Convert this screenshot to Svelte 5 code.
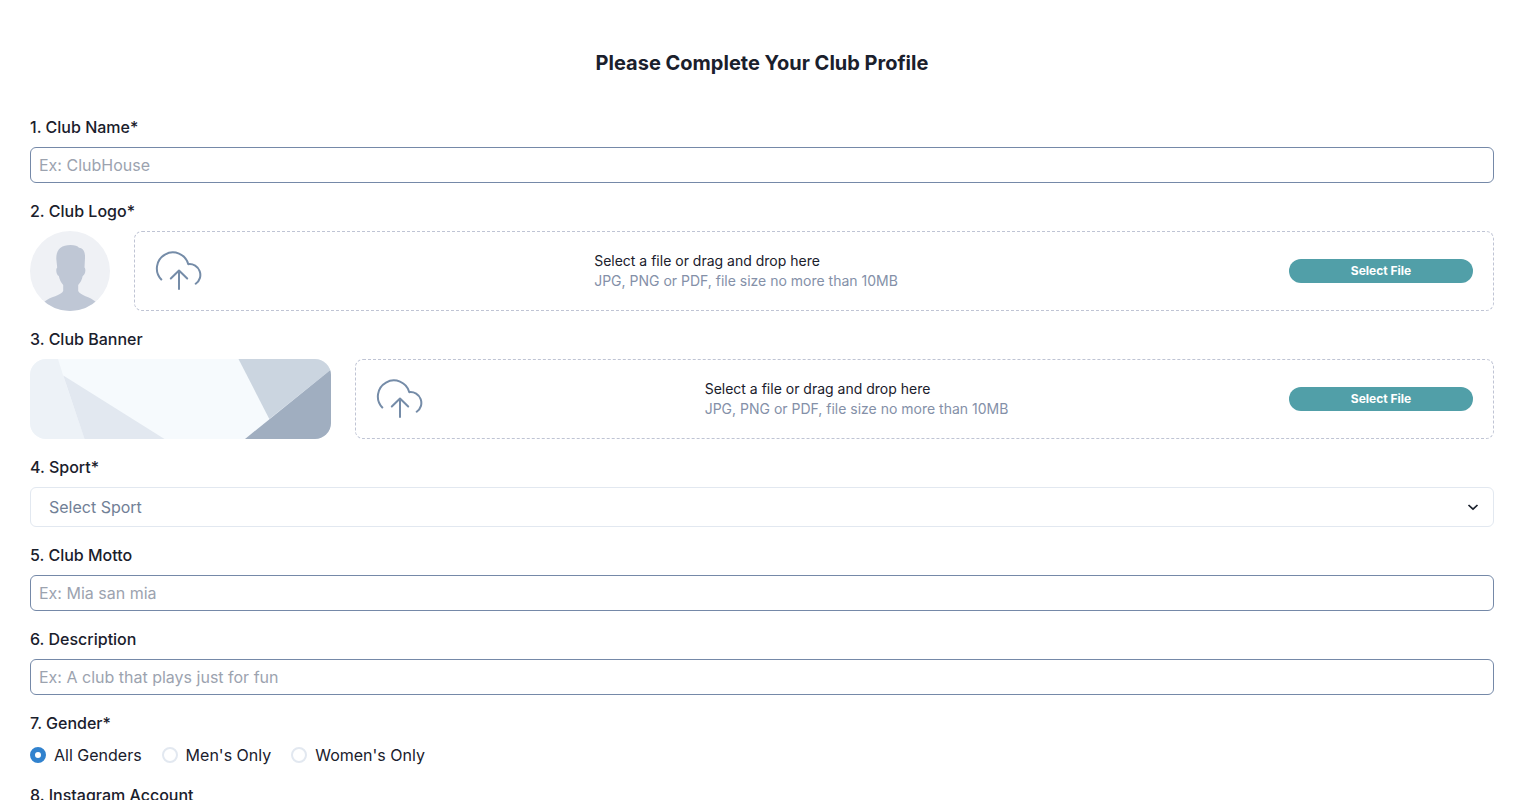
<script lang="ts">
  let gender = $state('all');
  let sport = $state('');
  const genders = [
    { value: 'all', label: 'All Genders' },
    { value: 'men', label: "Men's Only" },
    { value: 'women', label: "Women's Only" },
  ];
</script>

{#snippet dropzone(name: string)}
  <div class="dropzone">
    <svg class="cloud" viewBox="0 0 48 48" aria-hidden="true">
      <path d="M6.300 32.500A16 16 0 1 1 33.300 17.200A10.800 10.800 0 0 1 40.700 36.800" />
      <path d="M24 42V23.500M15.800 31.500L24 23.500L32.200 31.500" />
    </svg>
    <div class="hint">
      <p>Select a file or drag and drop here</p>
      <p class="limits">JPG, PNG or PDF, file size no more than 10MB</p>
    </div>
    <button type="button" aria-describedby={name}>Select File</button>
  </div>
{/snippet}

<form>
  <h1>Please Complete Your Club Profile</h1>

  <div class="field">
    <label class="label" for="name">1. Club Name*</label>
    <input id="name" class="text" type="text" placeholder="Ex: ClubHouse" />
  </div>

  <div class="field">
    <span class="label" id="logo">2. Club Logo*</span>
    <div class="upload">
      <svg class="avatar" viewBox="0 0 80 80" aria-hidden="true">
        <rect width="80" height="80" fill="#eff1f5" />
        <path fill="#bfc7d5" d="M40.500 14C45 14 47.500 15 49 16.700C53.500 17.300 55.300 21 55 27L54.500 36.500C56.200 38 55.300 44 52.700 45C52 48.500 50.500 51.500 48.200 54V60C50 64.500 60 65.500 66 71V80H14V71C20 65.500 31.500 64.500 33.200 60V54C31 51.500 29.500 48.500 28.800 45C26.200 44 25.500 38 27.200 36.500L26.300 28C26 18.500 31 14 40.500 14Z" />
      </svg>
      {@render dropzone('logo')}
    </div>
  </div>

  <div class="field">
    <span class="label" id="banner">3. Club Banner</span>
    <div class="upload">
      <svg class="banner" viewBox="0 0 301 80" preserveAspectRatio="none" aria-hidden="true">
        <rect width="301" height="80" fill="#f6fafd" />
        <path fill="#edf2f7" d="M0 0H28L33.300 17L54.500 80H0Z" />
        <path fill="#e2e8f0" d="M33.300 16.500L134.500 80H54.500Z" />
        <path fill="#cbd5e0" d="M208.500 0H301V10.500L239.300 60Z" />
        <path fill="#a0aec0" d="M301 10.500V80H215Z" />
      </svg>
      {@render dropzone('banner')}
    </div>
  </div>

  <div class="field">
    <label class="label" for="sport">4. Sport*</label>
    <div class="picker">
      <select id="sport" bind:value={sport}>
        <option value="">Select Sport</option>
      </select>
      <svg class="chevron" viewBox="0 0 20 20" aria-hidden="true">
        <path d="M5.500 8L10 12.200L14.500 8" />
      </svg>
    </div>
  </div>

  <div class="field">
    <label class="label" for="motto">5. Club Motto</label>
    <input id="motto" class="text" type="text" placeholder="Ex: Mia san mia" />
  </div>

  <div class="field">
    <label class="label" for="description">6. Description</label>
    <input id="description" class="text" type="text" placeholder="Ex: A club that plays just for fun" />
  </div>

  <div class="field">
    <span class="label" id="gender">7. Gender*</span>
    <div class="radios" role="radiogroup" aria-labelledby="gender">
      {#each genders as g}
        <label>
          <input type="radio" name="gender" value={g.value} bind:group={gender} />
          {g.label}
        </label>
      {/each}
    </div>
  </div>

  <div class="field">
    <label class="label" for="instagram">8. Instagram Account</label>
    <input id="instagram" class="text" type="text" />
  </div>
</form>

<style>
  :global(html) {
    scrollbar-width: none;
  }
  :global(body) {
    background: #fff;
  }
  form {
    display: flex;
    flex-direction: column;
    gap: 16px;
    padding: 47px 25px 24px 30px;
    font: 400 16px/24px Inter, sans-serif;
    color: #1a202c;
  }
  h1 {
    margin: 0 0 20px;
    font-size: 20px;
    line-height: 32px;
    font-weight: 700;
    text-align: center;
  }
  .field {
    display: flex;
    flex-direction: column;
    gap: 8px;
  }
  .label {
    font-weight: 500;
  }
  .text {
    box-sizing: border-box;
    width: 100%;
    height: 36px;
    padding: 0 8px;
    border: 1px solid #7589a8;
    border-radius: 6px;
    background: #fff;
    font: inherit;
    color: inherit;
  }
  .text::placeholder {
    color: #9ca3af;
    opacity: 1;
  }
  .upload {
    display: flex;
    gap: 24px;
  }
  .avatar {
    flex: none;
    width: 80px;
    height: 80px;
    border-radius: 50%;
  }
  .banner {
    flex: none;
    width: 301px;
    height: 80px;
    border-radius: 16px;
  }
  .dropzone {
    flex: 1;
    display: flex;
    align-items: center;
    justify-content: space-between;
    box-sizing: border-box;
    height: 80px;
    padding: 0 20px;
    border: 1px dashed #bfc4d4;
    border-radius: 8px;
  }
  .cloud {
    width: 48px;
    height: 48px;
    fill: none;
    stroke: #758ca8;
    stroke-width: 2;
    stroke-linecap: round;
    stroke-linejoin: round;
  }
  .hint {
    font-size: 14px;
    line-height: 20px;
  }
  .hint p {
    margin: 0;
  }
  .hint .limits {
    color: #8490a8;
  }
  button {
    width: 184px;
    height: 24px;
    padding: 0;
    border: 0;
    border-radius: 12px;
    background: #519fa8;
    color: #fff;
    font: 700 12px/16px Inter, sans-serif;
  }
  .picker {
    display: grid;
    align-items: center;
  }
  select {
    grid-area: 1 / 1;
    appearance: none;
    width: 100%;
    height: 40px;
    padding: 0 18px;
    border: 1px solid #e2e8f0;
    border-radius: 6px;
    background: #fff;
    font: inherit;
    color: #718096;
  }
  .chevron {
    grid-area: 1 / 1;
    justify-self: end;
    width: 20px;
    height: 20px;
    margin-right: 11px;
    fill: none;
    stroke: #1a202c;
    stroke-width: 1.7;
    pointer-events: none;
  }
  .radios {
    display: flex;
    gap: 20px;
  }
  .radios label {
    display: flex;
    align-items: center;
    gap: 8px;
  }
  .radios input {
    appearance: none;
    box-sizing: border-box;
    width: 16px;
    height: 16px;
    margin: 0;
    border: 2px solid #e2e8f0;
    border-radius: 50%;
    background: #fff;
  }
  .radios input:checked {
    border: 5px solid #3182ce;
  }
</style>
